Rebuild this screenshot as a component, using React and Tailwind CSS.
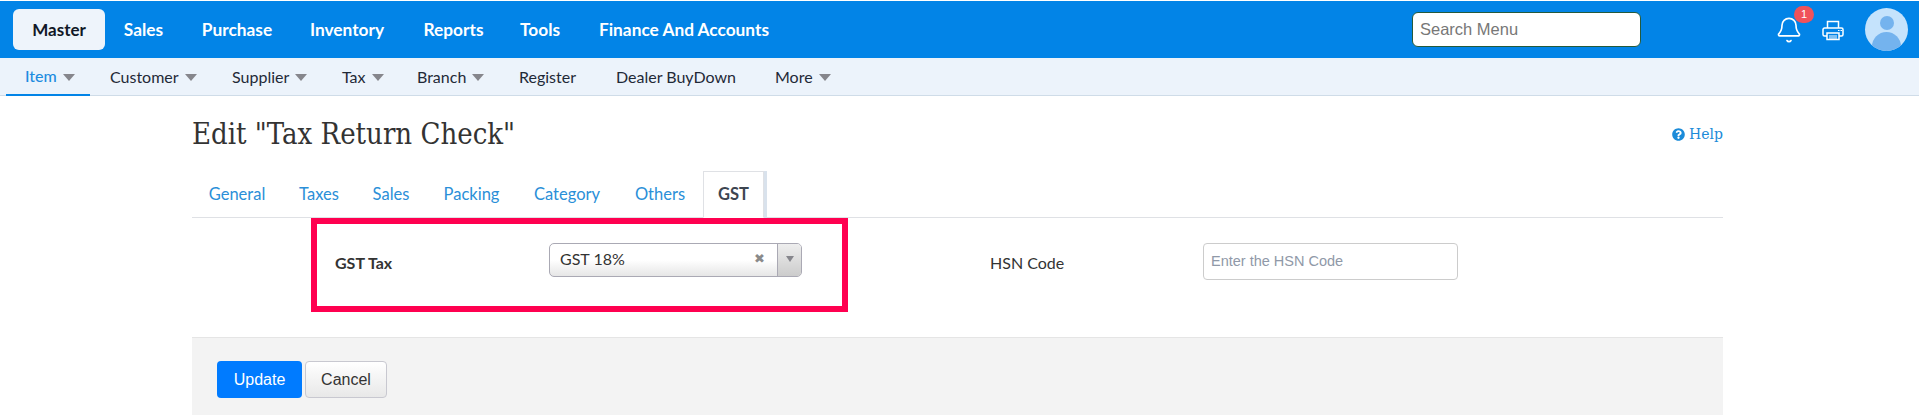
import React from "react";
import { Bell } from "lucide-react";
import { FaQuestionCircle } from "react-icons/fa";

const mainMenu = [
  { label: "Sales", w: "w-[77px]" },
  { label: "Purchase", w: "w-[110px]" },
  { label: "Inventory", w: "w-[110px]" },
  { label: "Reports", w: "w-[103px]" },
  { label: "Tools", w: "w-[70px]" },
  { label: "Finance And Accounts", w: "w-[218px]" },
];

const subMenu = [
  { label: "Customer", caret: true, w: "w-[122px]" },
  { label: "Supplier", caret: true, w: "w-[110px]" },
  { label: "Tax", caret: true, w: "w-[75px]" },
  { label: "Branch", caret: true, w: "w-[102px]" },
  { label: "Register", w: "w-[97px]" },
  { label: "Dealer BuyDown", w: "w-[159px]" },
  { label: "More", caret: true, w: "w-[90px]" },
];

const tabs = [
  { label: "General", w: "w-[90px]" },
  { label: "Taxes", w: "w-[74px]" },
  { label: "Sales", w: "w-[70px]" },
  { label: "Packing", w: "w-[91px]" },
  { label: "Category", w: "w-[100px]" },
  { label: "Others", w: "w-[86px]" },
];

function Caret() {
  return <span className="ml-[6px] mt-[2px] h-0 w-0 border-x-[6.5px] border-t-[7px] border-x-transparent border-t-[#86868c]" />;
}

function PrinterIcon() {
  return (
    <svg width="22" height="21" viewBox="0 0 22 21" fill="none" stroke="currentColor" strokeWidth="1.5" className="ml-[19px] mt-[2px]">
      <path d="M5.5 8V1.5h11V8" />
      <path d="M5 16H2.5A1.5 1.5 0 0 1 1 14.5V9.5A1.5 1.5 0 0 1 2.5 8h17A1.5 1.5 0 0 1 21 9.5v5a1.5 1.5 0 0 1-1.5 1.5H17" />
      <path d="M5 13h12v6.5H5z" />
      <path d="M7 16h8M7 18h8" strokeWidth="1" />
      <path d="M16 10.5h1.5M18.5 10.5H20" strokeWidth="1" />
    </svg>
  );
}

export default function App() {
  return (
    <div className="h-[415px] overflow-hidden bg-white font-['Lato',sans-serif]">
      <div className="mt-px flex h-[57px] items-center bg-[#0284e7] pl-[13px] text-[17.3px] font-bold text-white">
        <div className="flex h-[41px] w-[92px] items-center justify-center rounded-[6px] bg-[#eef4fb] text-[17px] text-[#111827]">Master</div>
        <div className="flex">
          {mainMenu.map((m) => (
            <div key={m.label} className={`${m.w} text-center`}>{m.label}</div>
          ))}
        </div>
        <input
          placeholder="Search Menu"
          className="ml-[619px] h-[35px] w-[229px] rounded-[6px] border border-[#245a3c] bg-white px-[7px] font-['Liberation_Sans',sans-serif] text-[16.5px] font-normal text-[#333] placeholder:text-[#777]"
        />
        <div className="relative ml-[134px] flex h-7 w-7 items-center justify-center">
          <Bell size={28} strokeWidth={1.4} />
          <span className="absolute left-[19px] top-[-10px] flex h-[17px] w-[20px] items-center justify-center rounded-full bg-[#f0525a] font-['Liberation_Sans',sans-serif] text-[11px] font-normal">1</span>
        </div>
        <PrinterIcon />
        <div className="relative ml-[21px] h-[43px] w-[43px] overflow-hidden rounded-full bg-[#c5e3fc]">
          <div className="mx-auto mt-[8px] h-[14px] w-[14px] rounded-full bg-[#74b3ee]" />
          <div className="absolute left-[7px] top-[24px] h-[30px] w-[29px] rounded-full bg-[#74b3ee]" />
        </div>
      </div>

      <div className="flex h-[38px] items-stretch border-b border-[#cfdce8] bg-[#ecf3fb] pl-[6px] text-[16px] text-[#1f2937]">
        <div className="-mb-px flex w-[84px] items-center border-b-2 border-[#0284e7] pl-[19px] font-medium text-[#1d8ce0]">
          Item<Caret />
        </div>
        {subMenu.map((s) => (
          <div key={s.label} className={`${s.w} flex items-center pl-5`}>
            {s.label}{s.caret && <Caret />}
          </div>
        ))}
      </div>

      <div className="ml-[192px] mr-[196px]">
        <div className="flex h-[75px] items-center justify-between pt-[2px]">
          <h1 className="font-['DejaVu_Serif_Condensed','DejaVu_Serif',serif] text-[29px] font-normal text-[#333]">Edit "Tax Return Check"</h1>
          <div className="flex items-center gap-[4px] font-['DejaVu_Serif',serif] text-[14px] text-[#1b8bd9]">
            <FaQuestionCircle size={13} />Help
          </div>
        </div>

        <div className="flex h-[47px] items-stretch border-b border-[#dfe1e5] text-[16.5px] text-[#2a8fd8]">
          {tabs.map((t) => (
            <div key={t.label} className={`${t.w} flex items-center justify-center`}>{t.label}</div>
          ))}
          <div className="-mb-px flex w-[61px] items-center justify-center border border-b-white border-[#dfe1e5] bg-white font-bold text-[#3d4551] shadow-[3px_0_0_#d9e2ec]">GST</div>
        </div>

        <div className="relative flex h-[119px] items-start text-[16px] text-[#333]">
          <div className="absolute left-[119px] top-0 h-[94px] w-[537px] border-[6px] border-[#ff0050]" />
          <div className="ml-[143px] mt-[33px] w-[214px] font-bold">GST Tax</div>
          <div className="mt-[25px] flex h-[34px] w-[253px] overflow-hidden rounded-[5px] border border-[#aaa9b4] bg-gradient-to-b from-white from-50% to-[#e6e6e6]">
            <div className="flex flex-1 items-center justify-between pb-[2px] pl-[10px] pr-[12px]">
              GST 18%
              <span className="font-['DejaVu_Sans',sans-serif] text-[13px] font-bold text-[#8a8a8a]">✖</span>
            </div>
            <div className="flex w-[24px] items-start justify-center border-l border-[#aaa9b4] bg-gradient-to-b from-[#eee] to-[#ccc] pt-[12px]">
              <span className="h-0 w-0 border-x-[4px] border-t-[6px] border-x-transparent border-t-[#86868c]" />
            </div>
          </div>
          <div className="ml-[188px] mt-[33px] w-[213px]">HSN Code</div>
          <input
            placeholder="Enter the HSN Code"
            className="mt-[25px] h-[37px] w-[255px] rounded-[4px] border border-[#cccccc] px-[7px] pb-[2px] font-['Liberation_Sans',sans-serif] text-[14.5px] placeholder:text-[#9099a8]"
          />
        </div>

        <div className="flex h-[78px] gap-[3px] border-t border-[#e5e5e5] bg-[#f3f3f3] pl-[25px] pt-[23px] font-['Liberation_Sans',sans-serif] text-[16px]">
          <button className="h-[37px] w-[85px] rounded-[4px] bg-[#007bff] text-white">Update</button>
          <button className="h-[37px] w-[82px] rounded-[4px] border border-[#c8c8d0] bg-gradient-to-b from-white to-[#e8e8e8] text-[#333]">Cancel</button>
        </div>
      </div>
    </div>
  );
}
